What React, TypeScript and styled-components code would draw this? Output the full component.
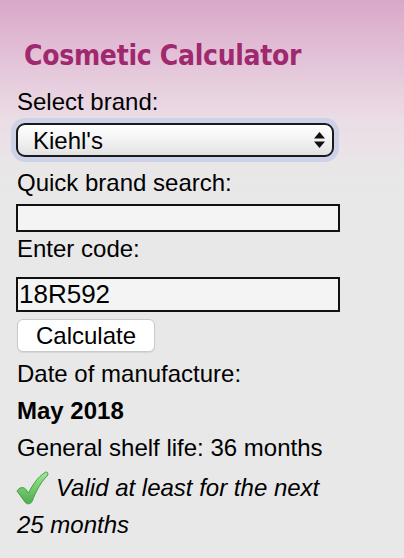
import styled, { createGlobalStyle } from 'styled-components';

const GlobalStyle = createGlobalStyle`
  html, body {
    margin: 0;
    padding: 0;
  }
  body {
    min-height: 558px;
    background: linear-gradient(180deg, #d9a8c8 0px, #e3c3d8 60px, #ebdde6 120px, #e9e6e8 165px, #e8e8e8 200px);
    font-family: "Liberation Sans", Arial, sans-serif;
    color: #000;
  }
`;

const Page = styled.div`
  display: flex;
  flex-direction: column;
  align-items: flex-start;
  padding: 39px 0 0 16px;
`;

const Title = styled.h1`
  margin: 0 0 15px 8px;
  font-family: "DejaVu Sans Condensed", "DejaVu Sans", sans-serif;
  font-weight: bold;
  font-size: 28px;
  line-height: 34px;
  color: #a0286f;
  letter-spacing: -0.3px;
`;

const Label = styled.div<{ $gap?: number }>`
  font-size: 24px;
  line-height: 28px;
  margin-top: ${(p) => p.$gap ?? 0}px;
  padding-left: 1px;
`;

const SelectWrap = styled.div`
  position: relative;
  margin-top: 7px;
  width: 318px;
  height: 34px;
  border-radius: 9px;
  box-shadow: 0 0 0 5px #cdd2e8;
`;

const Select = styled.select`
  appearance: none;
  -webkit-appearance: none;
  width: 100%;
  height: 100%;
  box-sizing: border-box;
  border: 2px solid #1a1a1a;
  border-radius: 9px;
  background: linear-gradient(180deg, #ffffff 0%, #f4f4f4 45%, #e2e2e2 100%);
  font-family: "Liberation Sans", Arial, sans-serif;
  font-size: 24px;
  color: #000;
  padding: 0 0 0 15px;
  outline: none;
`;

const Arrows = styled.svg`
  position: absolute;
  right: 9px;
  top: 9px;
  pointer-events: none;
`;

const TextInput = styled.input<{ $h: number; $big?: boolean; $gap: number }>`
  box-sizing: border-box;
  width: 324px;
  height: ${(p) => p.$h}px;
  margin-top: ${(p) => p.$gap}px;
  border: 2px solid #111;
  background: #f4f4f4;
  font-family: "Liberation Sans", Arial, sans-serif;
  font-size: ${(p) => (p.$big ? 26 : 20)}px;
  color: #000;
  padding: 0 0 0 1px;
  outline: none;
`;

const Button = styled.button`
  margin: 7px 0 0 1px;
  width: 138px;
  height: 33px;
  border: 1px solid #c9c9c9;
  border-radius: 6px;
  background: #ffffff;
  font-family: "Liberation Sans", Arial, sans-serif;
  font-size: 24px;
  color: #000;
  padding: 0;
  box-shadow: 0 1px 1px rgba(0, 0, 0, 0.08);
`;

const ResultLine = styled.div<{ $bold?: boolean; $italic?: boolean; $gap?: number }>`
  display: flex;
  align-items: center;
  gap: 7px;
  font-size: 24px;
  line-height: 37px;
  padding-left: 1px;
  margin-top: ${(p) => p.$gap ?? 0}px;
  font-weight: ${(p) => (p.$bold ? 'bold' : 'normal')};
  font-style: ${(p) => (p.$italic ? 'italic' : 'normal')};
`;

const CheckIcon = styled.svg`
  margin-left: -2px;
  flex: none;
`;

const Check = () => (
  <CheckIcon width="34" height="35" viewBox="0 0 34 35">
    <defs>
      <linearGradient id="chk" x1="0" y1="0" x2="0" y2="1">
        <stop offset="0" stopColor="#a8e4a0" />
        <stop offset="0.5" stopColor="#72ca6c" />
        <stop offset="1" stopColor="#52ad50" />
      </linearGradient>
    </defs>
    <path
      d="M2 21 C4 17.5 8 16.5 10.5 19 L13.5 23 C18 14 23 7 30 2.5 C32.5 1 34 3.5 32 6 C26 12 21 21 17 31.5 C15.5 34.5 11.5 34.5 10 32 Z"
      fill="url(#chk)"
      stroke="#44a044"
      strokeWidth="1"
      strokeLinejoin="round"
    />
  </CheckIcon>
);

export default function App() {
  return (
    <>
      <GlobalStyle />
      <Page>
        <Title>Cosmetic Calculator</Title>
        <Label>Select brand:</Label>
        <SelectWrap>
          <Select defaultValue="kiehls">
            <option value="kiehls">Kiehl's</option>
          </Select>
          <Arrows width="11" height="16" viewBox="0 0 11 16">
            <path d="M5.5 0 L11 6.5 H0 Z" fill="#111" />
            <path d="M0 9.5 H11 L5.5 16 Z" fill="#111" />
          </Arrows>
        </SelectWrap>
        <Label $gap={12}>Quick brand search:</Label>
        <TextInput $h={28} $gap={7} defaultValue="" />
        <Label $gap={3}>Enter code:</Label>
        <TextInput $h={35} $big $gap={14} defaultValue="18R592" />
        <Button>Calculate</Button>
        <ResultLine $gap={3}>Date of manufacture:</ResultLine>
        <ResultLine $bold>May 2018</ResultLine>
        <ResultLine>General shelf life: 36 months</ResultLine>
        <ResultLine $italic $gap={3}>
          <Check />
          Valid at least for the next
        </ResultLine>
        <ResultLine $italic>25 months</ResultLine>
      </Page>
    </>
  );
}
